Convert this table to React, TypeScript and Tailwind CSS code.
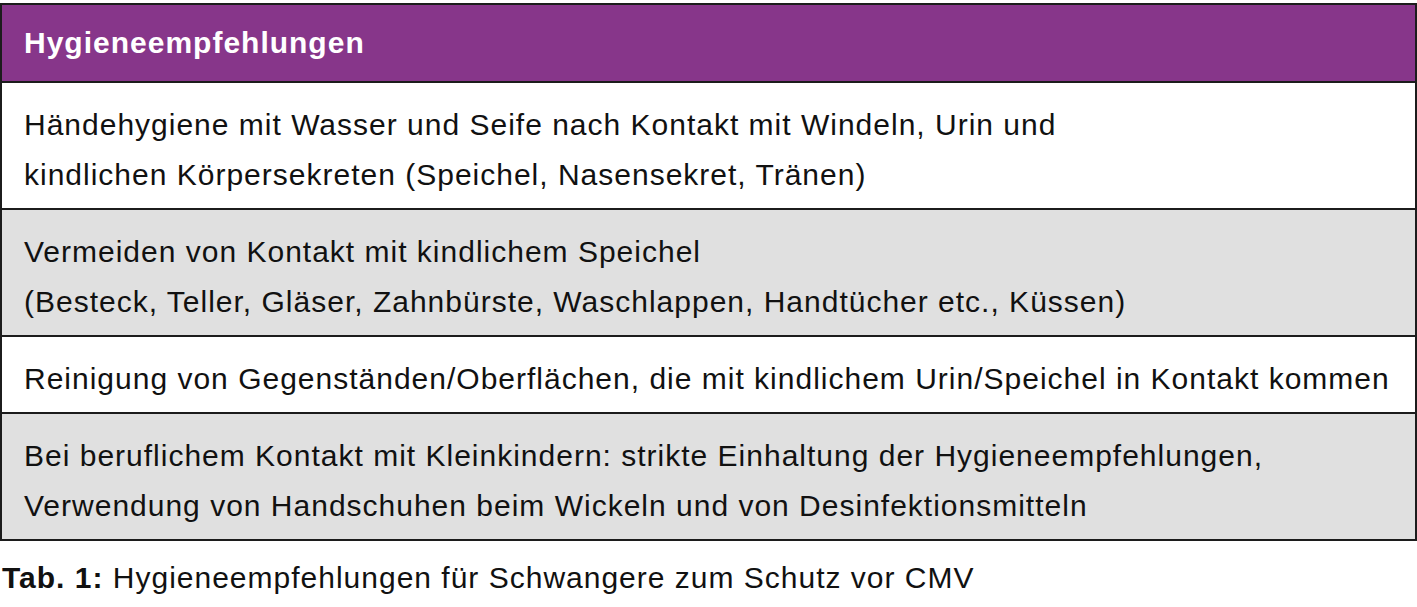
import React from "react";

const rows: { lines: string[]; gray: boolean }[] = [
  {
    lines: [
      "Händehygiene mit Wasser und Seife nach Kontakt mit Windeln, Urin und",
      "kindlichen Körpersekreten (Speichel, Nasensekret, Tränen)",
    ],
    gray: false,
  },
  {
    lines: [
      "Vermeiden von Kontakt mit kindlichem Speichel",
      "(Besteck, Teller, Gläser, Zahnbürste, Waschlappen, Handtücher etc., Küssen)",
    ],
    gray: true,
  },
  {
    lines: ["Reinigung von Gegenständen/Oberflächen, die mit kindlichem Urin/Speichel in Kontakt kommen"],
    gray: false,
  },
  {
    lines: [
      "Bei beruflichem Kontakt mit Kleinkindern: strikte Einhaltung der Hygieneempfehlungen,",
      "Verwendung von Handschuhen beim Wickeln und von Desinfektionsmitteln",
    ],
    gray: true,
  },
];

export default function App() {
  return (
    <div className="w-[1417px] h-[607px] bg-white text-[#111] font-['Liberation_Sans',Arial,sans-serif] text-[30px] leading-[50px] tracking-[1px] overflow-hidden">
      <div className="mt-[3px] border-2 border-[#1c1c1c]">
        <div className="bg-[#87368a] text-white font-bold px-[22px] py-[13px]">Hygieneempfehlungen</div>
        {rows.map((row, i) => (
          <div
            key={i}
            className={`border-t-2 border-[#1c1c1c] px-[22px] pt-[17px] pb-[8px] whitespace-nowrap ${row.gray ? "bg-[#e0e0e0]" : "bg-white"}`}
          >
            {row.lines.map((l, j) => (
              <div key={j}>{l}</div>
            ))}
          </div>
        ))}
      </div>
      <div className="mt-[12px] pl-[2px]">
        <span className="font-bold">Tab. 1:</span> Hygieneempfehlungen für Schwangere zum Schutz vor CMV
      </div>
    </div>
  );
}
